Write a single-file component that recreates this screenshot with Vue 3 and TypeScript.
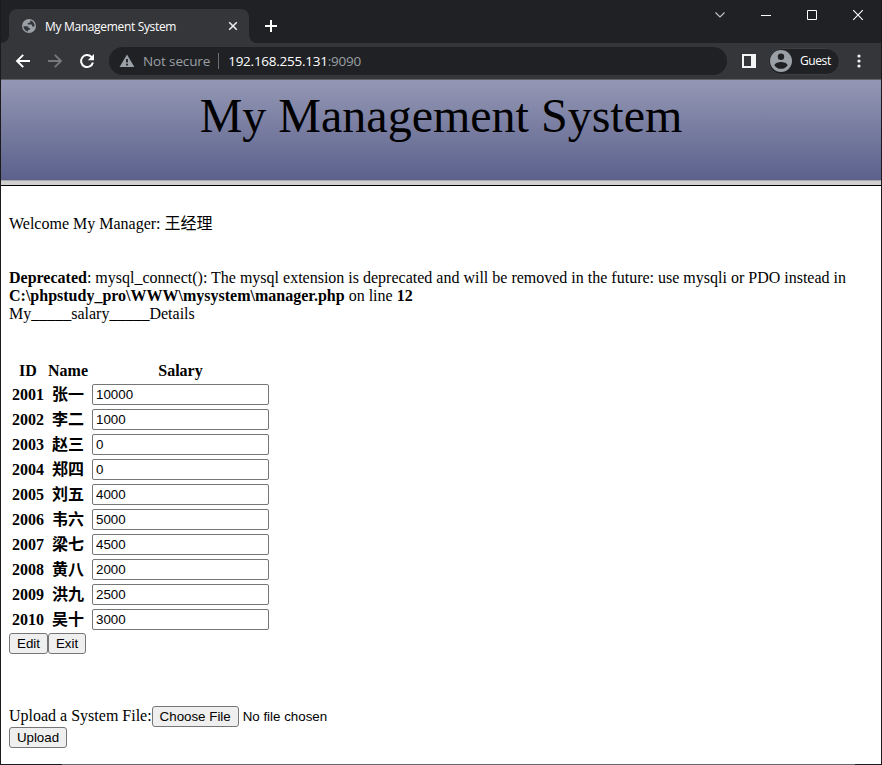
<script setup lang="ts">
import { ref } from 'vue'

interface Employee {
  id: number
  name: string
  salary: string
}

const employees = ref<Employee[]>([
  { id: 2001, name: '张一', salary: '10000' },
  { id: 2002, name: '李二', salary: '1000' },
  { id: 2003, name: '赵三', salary: '0' },
  { id: 2004, name: '郑四', salary: '0' },
  { id: 2005, name: '刘五', salary: '4000' },
  { id: 2006, name: '韦六', salary: '5000' },
  { id: 2007, name: '梁七', salary: '4500' },
  { id: 2008, name: '黄八', salary: '2000' },
  { id: 2009, name: '洪九', salary: '2500' },
  { id: 2010, name: '吴十', salary: '3000' },
])
</script>

<template>
  <div class="window">
    <div class="tabstrip">
      <svg class="flare" width="8" height="8" viewBox="0 0 8 8"><path d="M8 0v8H0a8 8 0 0 0 8-8z" fill="#35363a" /></svg>
      <div class="tab">
        <svg class="favicon" width="16" height="16" viewBox="0 0 16 16">
          <circle cx="8" cy="8" r="7" fill="#9aa0a6" />
          <path d="M2.4 8.2 5.6 8.3c1.400 0 2 .6 2 1.700h1.300v1.800H7.100v1.700C4.500 13.200 2.500 11 2.400 8.200zM9.300 2.400v1.300c0 .8-.6 1.200-1.400 1.200H6.700v1.500h3.100c.9 0 1.300.5 1.300 1.200v.9h2.400c.4-2.700-1.300-5.400-4.200-6.100z" fill="#35363a" />
        </svg>
        <span class="tab-title">My Management System</span>
        <svg class="tab-close" width="10" height="10" viewBox="0 0 10 10"><path d="M1.200 1.200l7.600 7.600M8.800 1.200L1.200 8.800" stroke="#e8eaed" stroke-width="1.600" /></svg>
      </div>
      <svg class="flare" width="8" height="8" viewBox="0 0 8 8"><path d="M0 0v8h8a8 8 0 0 1-8-8z" fill="#35363a" /></svg>
      <svg class="new-tab" width="12" height="12" viewBox="0 0 12 12"><path d="M6 0v12M0 6h12" stroke="#fff" stroke-width="2" /></svg>
      <div class="controls">
        <svg width="12" height="12" viewBox="0 0 12 12"><path d="M1.500 3.500L6 8l4.500-4.500" fill="none" stroke="#c4c5c7" stroke-width="1.100" /></svg>
        <svg width="12" height="12" viewBox="0 0 12 12"><path d="M1 6.500h10" stroke="#fff" /></svg>
        <svg width="12" height="12" viewBox="0 0 12 12"><path d="M1.500 1.500h9v9h-9z" fill="none" stroke="#fff" /></svg>
        <svg width="12" height="12" viewBox="0 0 12 12"><path d="M1.200 1.200l9.600 9.600M10.800 1.200l-9.600 9.600" stroke="#fff" stroke-width="1.100" /></svg>
      </div>
    </div>

    <div class="toolbar">
      <svg class="nav" width="16" height="16" viewBox="0 0 16 16"><path d="M15 8H2.500M8.200 1.800L2 8l6.200 6.200" fill="none" stroke="#fff" stroke-width="1.900" /></svg>
      <svg class="nav" width="16" height="16" viewBox="0 0 16 16"><path d="M1 8h12.500M7.800 1.800L14 8l-6.200 6.200" fill="none" stroke="#77787b" stroke-width="1.900" /></svg>
      <svg class="nav" width="16" height="16" viewBox="0 0 16 16">
        <path d="M12.500 4A6 6 0 1 0 13.900 9.500" fill="none" stroke="#fff" stroke-width="2" />
        <path d="M15 1v6.200H8.800z" fill="#fff" />
      </svg>
      <div class="omnibox">
        <svg class="warning" width="16" height="14" viewBox="0 0 16 14">
          <path d="M8 .5L15.400 13H.6z" fill="#9aa0a6" />
          <path d="M8 5v3.600M8 9.800v1.800" stroke="#202124" stroke-width="1.800" />
        </svg>
        <span class="insecure">Not secure</span>
        <span class="divider"></span>
        <span class="host">192.168.255.131</span><span class="port">:9090</span>
      </div>
      <svg class="side-panel" width="14" height="14" viewBox="0 0 14 14"><path fill-rule="evenodd" d="M0 0h14v14H0zM2 2v10h7V2z" fill="#f4f4f5" /></svg>
      <div class="profile">
        <svg width="22" height="22" viewBox="0 0 22 22">
          <circle cx="11" cy="11" r="11" fill="#9aa0a6" />
          <circle cx="11" cy="6.700" r="3.200" fill="#202124" />
          <path d="M4.500 15.400c0-2.200 4.300-3.400 6.500-3.400s6.500 1.200 6.500 3.400c-1.300 2-3.700 3.400-6.500 3.400s-5.200-1.400-6.500-3.400z" fill="#202124" />
        </svg>
        <span class="guest">Guest</span>
      </div>
      <svg class="menu" width="4" height="14" viewBox="0 0 4 14"><g fill="#f1f3f4"><circle cx="2" cy="2" r="1.600" /><circle cx="2" cy="7" r="1.600" /><circle cx="2" cy="12" r="1.600" /></g></svg>
    </div>

    <main class="page">
      <header class="banner">My Management System</header>
      <div class="rule"></div>
      <div class="content">
        <div class="welcome">Welcome My Manager: 王经理</div>
        <div class="notice">
          <b>Deprecated</b>: mysql_connect(): The mysql extension is deprecated and will be removed in the future: use mysqli or PDO instead in
          <b>C:\phpstudy_pro\WWW\mysystem\manager.php</b> on line <b>12</b><br />
          My_____salary_____Details
        </div>
        <form @submit.prevent>
          <table>
            <thead>
              <tr><th>ID</th><th>Name</th><th>Salary</th></tr>
            </thead>
            <tbody>
              <tr v-for="employee in employees" :key="employee.id">
                <th>{{ employee.id }}</th>
                <th>{{ employee.name }}</th>
                <th><input v-model="employee.salary" class="salary" type="text" /></th>
              </tr>
            </tbody>
          </table>
          <div class="actions"><button class="edit">Edit</button><button class="exit">Exit</button></div>
        </form>
        <form class="upload" @submit.prevent>
          <div class="file-row">
            <span>Upload a System File:</span>
            <input class="file" type="file" />
          </div>
          <button class="send">Upload</button>
        </form>
      </div>
    </main>
    <div class="bottom-edge"></div>
  </div>
</template>

<style>
body {
  margin: 0;
  overflow: hidden;
}
</style>

<style scoped>
.window {
  box-sizing: border-box;
  width: 882px;
  height: 765px;
  display: flex;
  flex-direction: column;
  border: solid #1b1b1c;
  border-width: 0 1px;
  background: #fff;
  overflow: hidden;
}

svg {
  display: block;
  flex: none;
}

.tabstrip,
.toolbar {
  box-sizing: border-box;
  display: flex;
  flex: none;
  font-family: 'Open Sans', 'Noto Sans', sans-serif;
  font-size: 12px;
  color: #fff;
  white-space: nowrap;
}

.tabstrip {
  height: 43px;
  background: #202124;
  align-items: flex-end;
}

.tab {
  box-sizing: border-box;
  width: 240px;
  height: 34px;
  padding: 0 11px 0 12px;
  display: flex;
  align-items: center;
  background: #35363a;
  border-radius: 8px 8px 0 0;
}

.tab-title {
  margin-left: 8px;
  flex: 1;
  letter-spacing: -0.33px;
}

.new-tab {
  margin: 0 0 11px 8px;
}

.controls {
  display: flex;
  gap: 34px;
  margin: 0 17px 22px auto;
}

.toolbar {
  height: 37px;
  background: #35363a;
  border-bottom: 1px solid #606164;
  align-items: center;
  padding-left: 14px;
}

.nav {
  margin-right: 16px;
}

.omnibox {
  box-sizing: border-box;
  width: 618px;
  height: 28px;
  margin-left: -2px;
  padding-left: 10px;
  border-radius: 14px;
  background: #202124;
  display: flex;
  align-items: center;
  font-size: 13.5px;
}

.insecure {
  margin-left: 8px;
  color: #9aa0a6;
  letter-spacing: -0.13px;
}

.divider {
  width: 1px;
  height: 16px;
  margin: 0 9px 0 8px;
  background: #6c6e71;
}

.host,
.port {
  letter-spacing: -0.25px;
}

.port {
  color: #9aa0a6;
}

.side-panel {
  margin-left: 15px;
}

.profile {
  box-sizing: border-box;
  width: 72px;
  height: 27px;
  margin-left: 12px;
  padding-left: 1px;
  border: 1px solid #3e3f43;
  border-radius: 14px;
  background: #202124;
  display: flex;
  align-items: center;
}

.guest {
  margin: -1px 0 0 8px;
  letter-spacing: -0.4px;
}

.menu {
  margin-left: 17px;
}

.page {
  flex: 1;
  min-height: 0;
  font: 16px/18px 'Liberation Serif', 'Noto Sans CJK SC', serif;
  color: #000;
}

.banner {
  height: 100px;
  background: linear-gradient(#9497b4, #5b618c);
  text-align: center;
  font-size: 48px;
  line-height: 71px;
}

.rule {
  height: 4px;
  border-top: 1px solid #a9a9a9;
  border-bottom: 1px solid #000;
  background: #d0d0d0;
}

.content {
  padding: 29px 8px 0;
}

.welcome {
  height: 18px;
  margin-bottom: 36px;
}

.notice {
  margin-bottom: 36px;
}

table {
  border-spacing: 2px;
  border-collapse: separate;
}

th {
  height: 18px;
  padding: 1px;
  text-align: center;
  white-space: nowrap;
}

tbody th {
  height: 21px;
  line-height: 21px;
}

input,
button {
  font: 13.333px 'Liberation Sans', Arial, sans-serif;
  color: #000;
}

.salary {
  box-sizing: border-box;
  display: block;
  width: 177px;
  height: 21px;
  margin: 0;
  padding: 1px 3px;
  border: 1px solid #767676;
  border-radius: 2px;
  background: #fff;
}

button,
.file::file-selector-button {
  box-sizing: border-box;
  height: 21px;
  margin: 0;
  padding: 0;
  border: 1px solid #767676;
  border-radius: 3px;
  background: #efefef;
  color: #000;
  text-align: center;
}

.actions,
.file-row {
  display: flex;
}

.edit {
  width: 39px;
}

.exit {
  width: 38px;
}

.upload {
  margin-top: 52px;
}

.file-row {
  height: 21px;
  line-height: 19px;
}

.file {
  height: 21px;
  line-height: 19px;
}

.file::file-selector-button {
  width: 87px;
  margin-right: 4px;
  font: inherit;
  line-height: 19px;
}

.send {
  display: block;
  width: 58px;
}

.bottom-edge {
  flex: none;
  height: 1px;
  background: linear-gradient(90deg, #1b1b1c 61px, #6b6b6b 61px 854px, #1b1b1c 854px);
}
</style>
